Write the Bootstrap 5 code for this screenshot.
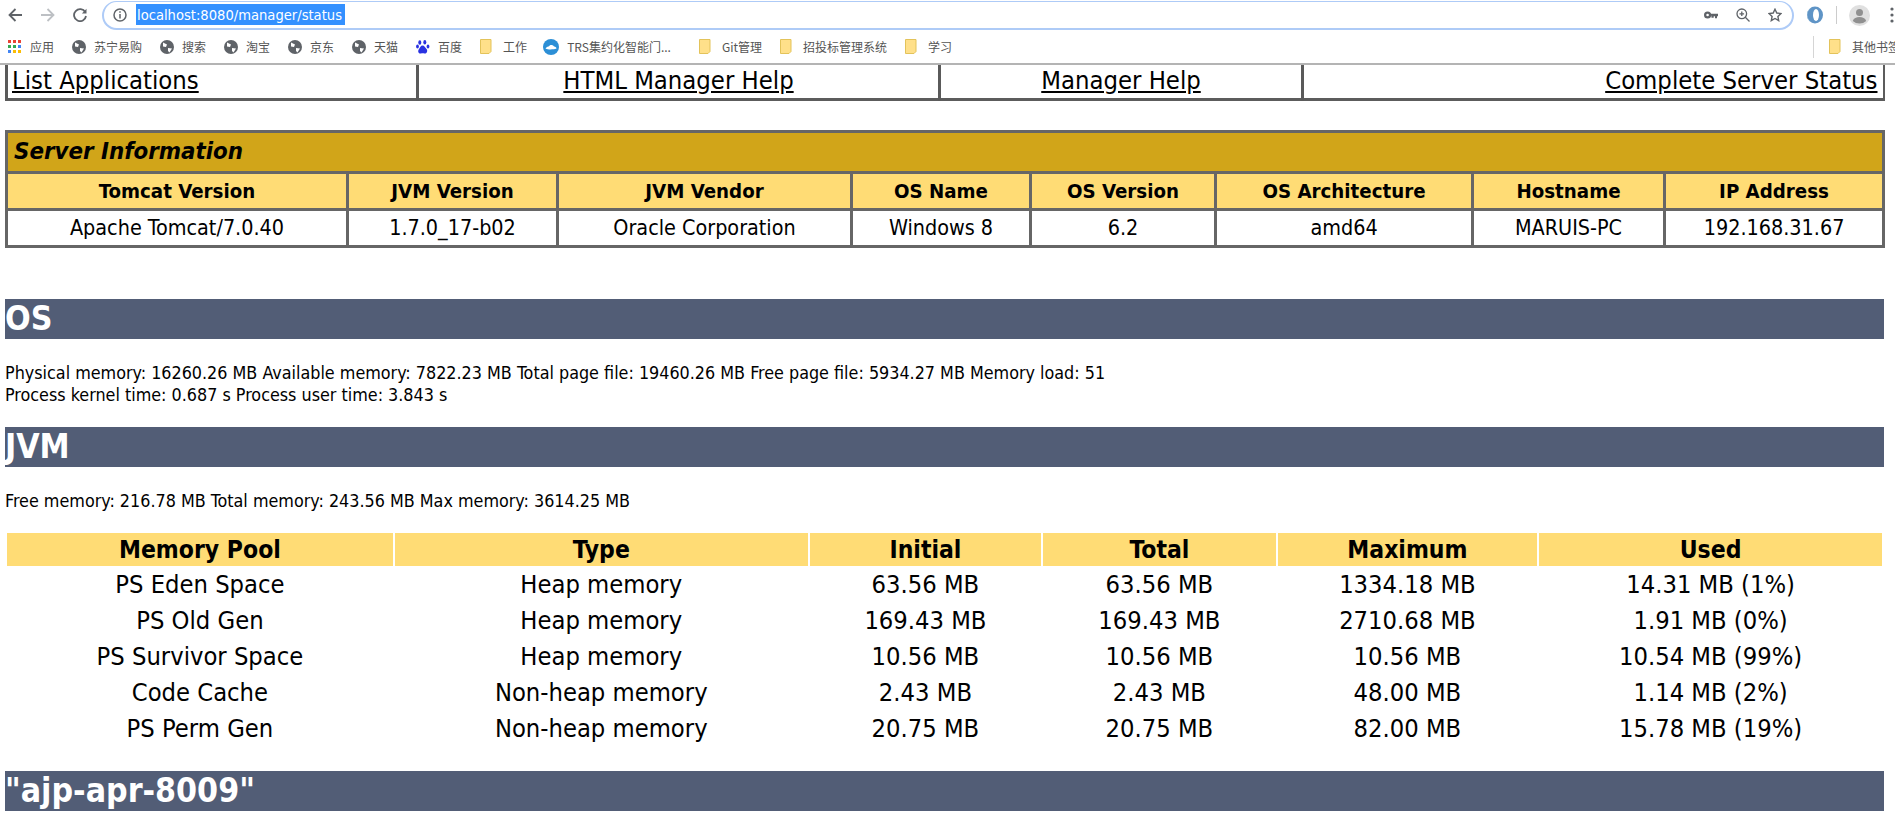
<!DOCTYPE html>
<html lang="zh-CN">
<head>
<meta charset="utf-8">
<title>Tomcat status</title>
<link href="https://cdn.jsdelivr.net/npm/bootstrap@5.3.0/dist/css/bootstrap.min.css" rel="stylesheet">
<style>
html,body{height:831px;overflow:hidden;background:#fff;color:#000}
body{font-family:"DejaVu Sans Condensed","DejaVu Sans",sans-serif}
.chrome-top{height:65px;border-bottom:2px solid #b4b4b4;font-family:"Noto Sans CJK SC",sans-serif}
.tool-row{height:30px}
.tool-ico{width:14px;height:14px;flex:none}
.back-ico{margin-left:8px}
.fwd-ico{margin-left:19px}
.rel-ico{margin-left:18px}
.addr{margin-left:15px;width:1692px;height:29px;border:2px solid #aecbf7;border-top-width:1px;border-radius:15px;padding-left:9px}
.url-sel{background:#3390ff;color:#fff;font:14.6px/21px "DejaVu Sans Condensed",sans-serif;margin-left:9px;padding:0 0 0 1px;width:209px;white-space:nowrap}
.addr-right{margin-left:auto;gap:18px;padding-right:10px}
.ext-zone{margin-left:13px}
.tool-sep{width:1px;height:18px;background:#ccc;margin:0 12px 0 13px}
.avatar{width:21px;height:21px;flex:none}
.dots{width:4px;height:16px;margin-left:20px;flex:none}
.marks{height:33px;padding-left:8px;font-size:12px;color:#555;white-space:nowrap;overflow:hidden}
.mk{display:flex;align-items:center;flex:none}
.mk svg{flex:none}
.mk-gap{margin-right:18px}
.mk-fold{gap:11px}
.mk-tight{margin-right:16px}
.mk-wide{margin-left:10px}
.mk-last{margin-right:-5px}
.sep-other{width:1px;height:22px;background:#d5d5d5;margin-left:auto;margin-right:15px;flex:none}
.page-wrap{padding:0 11px 0 5px}
table.nav-tbl,table.srv-tbl{width:1877px;table-layout:fixed;border-collapse:collapse}
.nav-tbl{font-size:25.4px;line-height:31px;border:solid #5c5c5c;border-width:0 2px 3px 2px}
.nav-tbl td{border-left:3px solid #5a5a5a;padding:0 5px 2px;height:33px}
.nav-tbl td:first-child{padding-left:4px}
.nav-tbl a{color:#000;text-decoration:underline}
.srv-tbl{margin-top:29px;border:3px solid #555;text-align:center}
.srv-tbl td{border:3px solid #666;padding:0 2px}
.srv-title{background:#d1a519;font-size:23.8px;font-weight:700;font-style:italic;text-align:left;height:41px;padding-left:6px!important}
.srv-head{background:#ffdc75;font-size:20.3px;font-weight:700;height:37px}
.srv-data{font-size:21.4px;height:37px}
.bar-h{background:#525d76;color:#fff;font-size:33.6px;font-weight:700;line-height:40px;height:40px;margin:0;overflow:hidden;white-space:nowrap}
.mt-os{margin-top:51px}
.mt-jvm{margin-top:21px}
.mt-ajp{margin-top:23px}
.info-p{font-size:17.8px;line-height:22px;margin:0;padding-top:23px;white-space:nowrap}
table.mem-tbl{width:1879px;table-layout:fixed;margin-top:19px;border-collapse:separate;border-spacing:2.5px 2px;text-align:center;font-size:25.3px}
.mem-tbl th{background:#ffdc75;font-weight:700;font-size:24.5px;height:33px;padding:0;line-height:33px}
.mem-tbl td{height:34px;padding:0;line-height:34px}
.c1{width:385px}.c2{width:412px}.c3{width:231px}.c4{width:232px}.c5{width:259px}.c6{width:342px}
.s1{width:341px}.s2{width:210px}.s3{width:294px}.s4{width:179px}.s5{width:185px}.s6{width:257px}.s7{width:192px}.s8{width:219px}
.n1{width:411px}.n2{width:522px}.n3{width:363px}.n4{width:581px}
</style>
</head>
<body>
<div class="chrome-top">
  <div class="tool-row d-flex align-items-center">
    <svg class="tool-ico back-ico" viewBox="0 0 14 14" fill="none" stroke="#5f6368" stroke-width="1.8"><path d="M14 7H1.5M7.5 1 1.5 7l6 6"/></svg>
    <svg class="tool-ico fwd-ico" viewBox="0 0 14 14" fill="none" stroke="#bdc0c4" stroke-width="1.8"><path d="M0 7h12.5M6.5 1l6 6-6 6"/></svg>
    <svg class="tool-ico rel-ico" viewBox="0 0 14 14" fill="none" stroke="#5f6368" stroke-width="1.8"><path d="M12.3 4.2A6 6 0 1 0 13 8"/><path d="M13.5 .8v4.6H8.9z" fill="#5f6368" stroke="none"/></svg>
    <div class="addr d-flex align-items-center">
      <svg class="tool-ico" viewBox="0 0 14 14" fill="none" stroke="#5f6368" stroke-width="1.5"><circle cx="7" cy="7" r="6"/><path d="M7 6v4.4M7 3.2v1.6"/></svg>
      <span class="url-sel">localhost:8080/manager/status</span>
      <div class="addr-right d-flex align-items-center">
        <svg class="tool-ico" viewBox="0 0 14 14" fill="#5f6368"><path d="M3.6 3.4a3.6 3.6 0 1 1 0 7.2 3.6 3.6 0 0 1 0-7.2zm0 2.3a1.3 1.3 0 1 0 0 2.6 1.3 1.3 0 0 0 0-2.6zM7 5.8h7v2.4h-1v2h-2v-2H9.700v1.500H7.500z"/></svg>
        <svg class="tool-ico" viewBox="0 0 14 14" fill="none" stroke="#5f6368" stroke-width="1.300"><circle cx="5.800" cy="5.800" r="4.800"/><path d="M9.300 9.300 13.500 13.500M5.800 3.500v4.600M3.500 5.800h4.600"/></svg>
        <svg class="tool-ico" viewBox="0 0 14 14" fill="none" stroke="#5f6368" stroke-width="1.400"><path d="M7 1.200 8.800 5l4.200.5-3.100 2.900.8 4.200L7 10.500l-3.700 2.100.8-4.200L1 5.500 5.200 5z"/></svg>
      </div>
    </div>
    <svg class="ext-zone" width="16" height="18" viewBox="0 0 16 18"><ellipse cx="8" cy="9" rx="8" ry="8.500" fill="#5f94c6"/><ellipse cx="9" cy="9" rx="3" ry="6" fill="#fff"/><path d="M3 3a8 8 0 0 0 0 12 7 7 0 0 1 0-12z" fill="#9cc0dd"/></svg>
    <div class="tool-sep"></div>
    <svg class="avatar" viewBox="0 0 21 21"><circle cx="10.500" cy="10.500" r="10.500" fill="#e0e0e0"/><circle cx="10.500" cy="7.500" r="3.500" fill="#909090"/><path d="M3.800 16c1-3 3.500-4 6.700-4s5.700 1 6.700 4a10 10 0 0 1-13.400 0z" fill="#909090"/></svg>
    <svg class="dots" viewBox="0 0 4 16" fill="#5f6368"><circle cx="2" cy="2" r="1.600"/><circle cx="2" cy="8" r="1.600"/><circle cx="2" cy="14" r="1.600"/></svg>
  </div>
  <div class="marks d-flex align-items-center">
    <div class="mk mk-gap gap-2">
      <svg width="14" height="14" viewBox="0 0 14 14"><g fill="#ea4335"><rect width="3" height="3"/><rect x="5" width="3" height="3"/><rect x="10" width="3" height="3"/></g><g fill="#34a853"><rect y="5" width="3" height="3"/><rect x="5" y="5" width="3" height="3"/></g><rect x="10" y="5" width="3" height="3" fill="#4285f4"/><g fill="#fbbc05"><rect x="5" y="10" width="3" height="3"/><rect x="10" y="10" width="3" height="3"/></g><rect y="10" width="3" height="3" fill="#4285f4"/></svg><span>应用</span>
    </div>
    <div class="mk mk-gap gap-2"><svg width="14" height="14" viewBox="0 0 14 14"><circle cx="7" cy="7" r="7" fill="#5f6368"/><path d="M3 2.500 7 4.500 6 7 3 6.500zM8 8l4 .5-2.500 4-1.500-1.500z" fill="#fff"/></svg><span>苏宁易购</span></div>
    <div class="mk mk-gap gap-2"><svg width="14" height="14" viewBox="0 0 14 14"><circle cx="7" cy="7" r="7" fill="#5f6368"/><path d="M3 2.500 7 4.500 6 7 3 6.500zM8 8l4 .5-2.500 4-1.500-1.500z" fill="#fff"/></svg><span>搜索</span></div>
    <div class="mk mk-gap gap-2"><svg width="14" height="14" viewBox="0 0 14 14"><circle cx="7" cy="7" r="7" fill="#5f6368"/><path d="M3 2.500 7 4.500 6 7 3 6.500zM8 8l4 .5-2.500 4-1.500-1.500z" fill="#fff"/></svg><span>淘宝</span></div>
    <div class="mk mk-gap gap-2"><svg width="14" height="14" viewBox="0 0 14 14"><circle cx="7" cy="7" r="7" fill="#5f6368"/><path d="M3 2.500 7 4.500 6 7 3 6.500zM8 8l4 .5-2.500 4-1.500-1.500z" fill="#fff"/></svg><span>京东</span></div>
    <div class="mk mk-gap gap-2"><svg width="14" height="14" viewBox="0 0 14 14"><circle cx="7" cy="7" r="7" fill="#5f6368"/><path d="M3 2.500 7 4.500 6 7 3 6.500zM8 8l4 .5-2.500 4-1.500-1.500z" fill="#fff"/></svg><span>天猫</span></div>
    <div class="mk mk-gap gap-2"><svg width="14" height="16" viewBox="0 0 14 16" fill="#2932e1"><ellipse cx="3.800" cy="3.500" rx="1.500" ry="2.300"/><ellipse cx="8.800" cy="3.200" rx="1.500" ry="2.300"/><ellipse cx="1.500" cy="7.500" rx="1.400" ry="2"/><ellipse cx="12" cy="7.500" rx="1.400" ry="2"/><path d="M6.500 6.500c2 0 2.500 2 4 3.500s.5 5-2 4.500c-1-.2-2-.4-3.500 0-2.800.5-3.500-2.500-2-4.500 1.300-1.500 1.500-3.500 3.500-3.500z"/></svg><span>百度</span></div>
    <div class="mk mk-tight mk-fold"><svg width="12" height="15" viewBox="0 0 12 15"><path d="M.5.500h10.500v12l-2 2H.5z" fill="#ffe08a" stroke="#e3c35a"/></svg><span>工作</span></div>
    <div class="mk mk-gap gap-2"><svg width="16" height="16" viewBox="0 0 16 16"><circle cx="8" cy="8" r="8" fill="#2c8fd6"/><path d="M2.500 9.500c1-2 3-1.800 3.500-2.300C7 5.500 10 5.500 11 7.500c1.300-.2 2.500 1 2.500 2-3 1-8 1.500-11 0z" fill="#fff"/></svg><span>TRS集约化智能门...</span></div>
    <div class="mk mk-gap mk-fold mk-wide"><svg width="12" height="15" viewBox="0 0 12 15"><path d="M.5.500h10.500v12l-2 2H.5z" fill="#ffe08a" stroke="#e3c35a"/></svg><span>Git管理</span></div>
    <div class="mk mk-gap mk-fold"><svg width="12" height="15" viewBox="0 0 12 15"><path d="M.5.500h10.500v12l-2 2H.5z" fill="#ffe08a" stroke="#e3c35a"/></svg><span>招投标管理系统</span></div>
    <div class="mk mk-fold"><svg width="12" height="15" viewBox="0 0 12 15"><path d="M.5.500h10.500v12l-2 2H.5z" fill="#ffe08a" stroke="#e3c35a"/></svg><span>学习</span></div>
    <div class="sep-other"></div>
    <div class="mk mk-fold mk-last"><svg width="12" height="15" viewBox="0 0 12 15"><path d="M.5.500h10.500v12l-2 2H.5z" fill="#ffe08a" stroke="#e3c35a"/></svg><span>其他书签</span></div>
  </div>
</div>
<div class="page-wrap">
  <table class="nav-tbl">
    <colgroup><col class="n1"><col class="n2"><col class="n3"><col class="n4"></colgroup>
    <tr><td class="text-start"><a href="#">List Applications</a></td><td class="text-center"><a href="#">HTML Manager Help</a></td><td class="text-center"><a href="#">Manager Help</a></td><td class="text-end"><a href="#">Complete Server Status</a></td></tr>
  </table>
  <table class="srv-tbl">
    <colgroup><col class="s1"><col class="s2"><col class="s3"><col class="s4"><col class="s5"><col class="s6"><col class="s7"><col class="s8"></colgroup>
    <tr><td colspan="8" class="srv-title">Server Information</td></tr>
    <tr class="srv-head"><td>Tomcat Version</td><td>JVM Version</td><td>JVM Vendor</td><td>OS Name</td><td>OS Version</td><td>OS Architecture</td><td>Hostname</td><td>IP Address</td></tr>
    <tr class="srv-data"><td>Apache Tomcat/7.0.40</td><td>1.7.0_17-b02</td><td>Oracle Corporation</td><td>Windows 8</td><td>6.2</td><td>amd64</td><td>MARUIS-PC</td><td>192.168.31.67</td></tr>
  </table>
  <h1 class="bar-h mt-os">OS</h1>
  <p class="info-p">Physical memory: 16260.26 MB Available memory: 7822.23 MB Total page file: 19460.26 MB Free page file: 5934.27 MB Memory load: 51<br>Process kernel time: 0.687 s Process user time: 3.843 s</p>
  <h1 class="bar-h mt-jvm">JVM</h1>
  <p class="info-p">Free memory: 216.78 MB Total memory: 243.56 MB Max memory: 3614.25 MB</p>
  <table class="mem-tbl">
    <colgroup><col class="c1"><col class="c2"><col class="c3"><col class="c4"><col class="c5"><col class="c6"></colgroup>
    <tr><th>Memory Pool</th><th>Type</th><th>Initial</th><th>Total</th><th>Maximum</th><th>Used</th></tr>
    <tr><td>PS Eden Space</td><td>Heap memory</td><td>63.56 MB</td><td>63.56 MB</td><td>1334.18 MB</td><td>14.31 MB (1%)</td></tr>
    <tr><td>PS Old Gen</td><td>Heap memory</td><td>169.43 MB</td><td>169.43 MB</td><td>2710.68 MB</td><td>1.91 MB (0%)</td></tr>
    <tr><td>PS Survivor Space</td><td>Heap memory</td><td>10.56 MB</td><td>10.56 MB</td><td>10.56 MB</td><td>10.54 MB (99%)</td></tr>
    <tr><td>Code Cache</td><td>Non-heap memory</td><td>2.43 MB</td><td>2.43 MB</td><td>48.00 MB</td><td>1.14 MB (2%)</td></tr>
    <tr><td>PS Perm Gen</td><td>Non-heap memory</td><td>20.75 MB</td><td>20.75 MB</td><td>82.00 MB</td><td>15.78 MB (19%)</td></tr>
  </table>
  <h1 class="bar-h mt-ajp">"ajp-apr-8009"</h1>
</div>
<script src="https://cdn.jsdelivr.net/npm/bootstrap@5.3.0/dist/js/bootstrap.bundle.min.js"></script>
</body>
</html>
